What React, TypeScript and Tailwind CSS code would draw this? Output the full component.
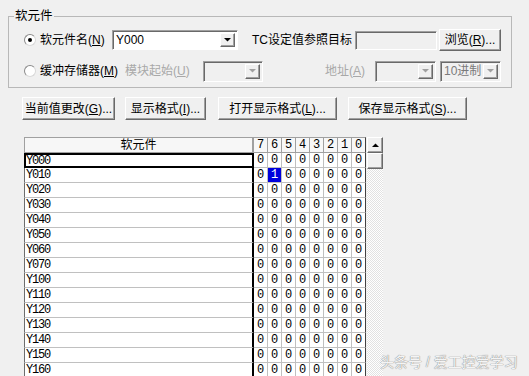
import React from "react";

const raised =
  "border border-t-white border-l-white border-b-[#696969] border-r-[#696969] shadow-[inset_-1px_-1px_0_#a0a0a0] bg-[#f0f0f0]";
const sunken =
  "border border-t-[#a0a0a0] border-l-[#a0a0a0] border-b-white border-r-white shadow-[inset_1px_1px_0_#696969]";

function Arrow({ disabled, up }: { disabled?: boolean; up?: boolean }) {
  return (
    <svg width="7" height="4" viewBox="0 0 7 4">
      <path d={up ? "M0 4h7L3.5 0.5z" : "M0 0h7L3.5 3.5z"} fill={disabled ? "#a0a0a0" : "#000"} />
    </svg>
  );
}

function Combo({ className, text, disabled, textGray }: { className: string; text?: string; disabled?: boolean; textGray?: boolean }) {
  return (
    <div className={`flex items-stretch p-[2px] ${sunken} ${disabled ? "bg-[#f0f0f0]" : "bg-white"} ${className}`}>
      <div className={`flex-1 flex items-center pl-[1px] text-[12px] leading-none ${textGray ? "text-[#7a7a7a]" : "text-black"}`}>{text}</div>
      <div className={`w-[15px] flex items-center justify-center ${raised}`}>
        <Arrow disabled={disabled} />
      </div>
    </div>
  );
}

function Radio({ checked }: { checked?: boolean }) {
  return (
    <div className="w-[12px] h-[12px] rounded-full border border-[#8a8a8a] border-b-[#d8d8d8] border-r-[#d8d8d8] bg-white flex items-center justify-center">
      {checked && <div className="w-[4px] h-[4px] rounded-full bg-black" />}
    </div>
  );
}

const rows = ["Y000", "Y010", "Y020", "Y030", "Y040", "Y050", "Y060", "Y070", "Y100", "Y110", "Y120", "Y130", "Y140", "Y150", "Y160"];
const bits = ["7", "6", "5", "4", "3", "2", "1", "0"];

export default function App() {
  return (
    <div className="relative w-[529px] h-[376px] overflow-hidden bg-[#f0f0f0] text-black font-['Liberation_Sans','Noto_Sans_CJK_SC',sans-serif] text-[12px]">
      {/* group box */}
      <div className="relative ml-[8px] mt-[16px] w-[504px] h-[72px] border border-[#b8b8b8]">
        <div className="absolute left-[5px] top-[-9px] px-[1px] bg-[#f0f0f0] text-[12.5px] leading-[16px]">软元件</div>
        <div className="pt-[12px]">
          <div className="flex items-center h-[22px]">
            <div className="ml-[15px]"><Radio checked /></div>
            <div className="ml-[4px] w-[72px] whitespace-nowrap">软元件名(<u>N</u>)</div>
            <Combo className="w-[126px] h-[20px]" text="Y000" />
            <div className="ml-[14px] w-[103px] whitespace-nowrap">TC设定值参照目标</div>
            <div className={`w-[82px] h-[19px] bg-[#f0f0f0] ${sunken}`} />
            <div className={`ml-[2px] w-[62px] h-[22px] flex items-center justify-center whitespace-nowrap ${raised}`}>浏览(<u>R</u>)...</div>
          </div>
          <div className="flex items-center h-[22px] mt-[9px]">
            <div className="ml-[15px]"><Radio /></div>
            <div className="ml-[4px] w-[85px] whitespace-nowrap">缓冲存储器(<u>M</u>)</div>
            <div className="w-[78px] whitespace-nowrap text-[#a8a8a8]">模块起始(<u>U</u>)</div>
            <Combo className="w-[60px] h-[21px]" disabled />
            <div className="ml-[62px] w-[50px] whitespace-nowrap text-[#a8a8a8]">地址(<u>A</u>)</div>
            <Combo className="w-[61px] h-[21px]" disabled />
            <Combo className="ml-[4px] w-[61px] h-[21px]" disabled textGray text="10进制" />
          </div>
        </div>
      </div>

      {/* buttons */}
      <div className="flex mt-[9px] h-[23px]">
        <div className={`ml-[22px] w-[93px] flex items-center justify-center whitespace-nowrap ${raised}`}>当前值更改(<u>G</u>)...</div>
        <div className={`ml-[10px] w-[81px] flex items-center justify-center whitespace-nowrap ${raised}`}>显示格式(<u>I</u>)...</div>
        <div className={`ml-[12px] w-[119px] flex items-center justify-center whitespace-nowrap ${raised}`}>打开显示格式(<u>L</u>)...</div>
        <div className={`ml-[11px] w-[119px] flex items-center justify-center whitespace-nowrap ${raised}`}>保存显示格式(<u>S</u>)...</div>
      </div>

      {/* table */}
      <div className="flex ml-[24px] mt-[17px]">
        <div className="flex flex-col">
          <div className="flex h-[16px]">
            <div className="w-[230px] h-[16px] flex items-center justify-center border-l border-t border-b border-r-2 border-[#a0a0a0] bg-[#f7f7f7] leading-none">软元件</div>
            {bits.map((b, i) => (
              <div
                key={b}
                className={`w-[14px] h-[16px] flex items-center justify-center border-t border-b border-r border-[#a0a0a0] bg-[#f7f7f7] font-['Liberation_Mono',monospace] text-[12px] leading-none ${i === 7 ? "border-r-[#404040]" : ""}`}
              >
                {b}
              </div>
            ))}
          </div>
          {rows.map((r, ri) => (
            <div key={r} className="flex h-[15px]">
              <div
                className={
                  ri === 0
                    ? "w-[230px] h-[15px] flex items-center pl-[0px] border-2 border-black bg-white font-['Liberation_Mono',monospace] text-[12px] tracking-[-1.2px] leading-none"
                    : "w-[230px] h-[15px] flex items-center pl-[1px] border-l border-l-[#6d6d6d] border-b border-b-[#c0c0c0] border-r-2 border-r-black bg-white font-['Liberation_Mono',monospace] text-[12px] tracking-[-1.2px] leading-none"
                }
              >
                {r}
              </div>
              {bits.map((b, i) => {
                const on = ri === 1 && i === 1;
                return (
                  <div
                    key={b}
                    className={`w-[14px] h-[15px] border-b border-b-[#c0c0c0] border-r ${i === 7 ? "border-r-[#404040]" : "border-r-[#c0c0c0]"} bg-white flex items-stretch`}
                  >
                    <div
                      className={`flex-1 flex items-center justify-center font-['Liberation_Mono',monospace] text-[12px] leading-none ${on ? "bg-[#0000dd] text-white" : "text-black"}`}
                    >
                      {on ? "1" : "0"}
                    </div>
                  </div>
                );
              })}
            </div>
          ))}
        </div>
        {/* scrollbar */}
        <div className="flex flex-col w-[16px] h-[240px] ml-[1px] bg-[repeating-conic-gradient(#ffffff_0_25%,#e2e2e2_0_50%)] bg-[length:2px_2px]">
          <div className={`h-[16px] flex items-center justify-center ${raised}`}>
            <Arrow up />
          </div>
          <div className={`h-[16px] ${raised}`} />
        </div>
      </div>

      {/* watermark */}
      <div className="absolute left-[380px] top-[353px] text-[14px] leading-[18px] text-[#f4f4f4] whitespace-nowrap [text-shadow:0_0_1px_#8a8a8a,0_0_1px_#8a8a8a]">
        头条号 / 爱工控爱学习
      </div>
    </div>
  );
}
